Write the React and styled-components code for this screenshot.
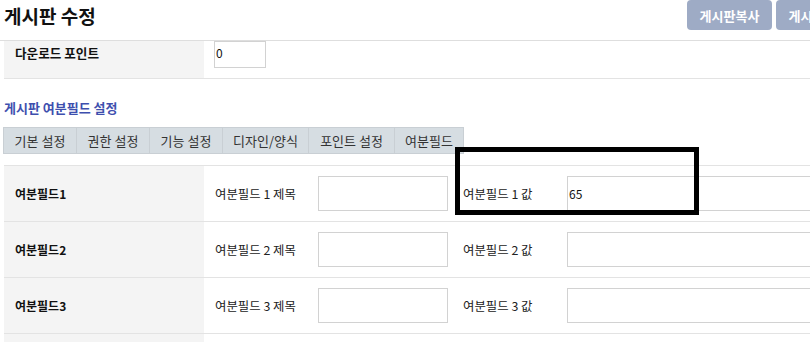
import styled, { createGlobalStyle } from "styled-components";

const GlobalStyle = createGlobalStyle`
  html, body {
    margin: 0;
    padding: 0;
    background: #fff;
    overflow: hidden;
  }
  body {
    font-family: "Noto Sans CJK KR", "Noto Sans", sans-serif;
    color: #222;
  }
  * {
    box-sizing: border-box;
  }
`;

const Page = styled.div`
  position: relative;
  width: 865px;
`;

const Header = styled.div`
  display: flex;
  justify-content: space-between;
  align-items: flex-start;
  height: 41px;
  padding: 0 4px;
  border-bottom: 1px solid #dedede;
`;

const Title = styled.h1`
  margin: 0;
  padding-top: 2px;
  font-size: 19px;
  font-weight: 700;
  line-height: 28px;
  color: #111;
`;

const ButtonGroup = styled.div`
  display: flex;
  gap: 4px;
`;

const Button = styled.button`
  width: 85px;
  height: 30px;
  border: none;
  border-radius: 4px;
  background: #9eabc5;
  color: #fff;
  font-family: inherit;
  font-size: 13px;
  font-weight: 700;
  padding: 0;
`;

const Row = styled.div`
  display: grid;
  grid-template-columns: 200px 1fr;
  margin-left: 4px;
  min-height: ${(p) => p.$height}px;
  border-bottom: 1px solid #e3e3e3;
`;

const Th = styled.div`
  background: #f4f4f4;
  padding: ${(p) => (p.$top ? "2px 11px 0" : "0 11px")};
  display: flex;
  align-items: ${(p) => (p.$top ? "flex-start" : "center")};
  font-size: ${(p) => p.$size || 12}px;
  font-weight: 700;
  color: #111;
`;

const Td = styled.div`
  display: flex;
  align-items: ${(p) => (p.$top ? "flex-start" : "center")};
  padding-left: ${(p) => p.$pad}px;
  font-size: 12px;
`;

const FieldLabel = styled.span`
  width: ${(p) => p.$width}px;
  margin-left: ${(p) => p.$gap || 0}px;
  flex-shrink: 0;
  font-size: 12.4px;
  color: #222;
`;

const Input = styled.div`
  width: ${(p) => p.$width}px;
  height: ${(p) => p.$height}px;
  flex-shrink: 0;
  border: 1px solid #d2d2d2;
  background: #fff;
  font-size: 12px;
  color: #111;
  padding: ${(p) => (p.$top ? "2px 1px" : "0 1px")};
  display: flex;
  align-items: ${(p) => (p.$top ? "flex-start" : "center")};
`;

const SectionTitle = styled.h2`
  margin: 0;
  padding: 20px 4px 0;
  height: 48px;
  font-size: 13px;
  font-weight: 700;
  color: #3e4fae;
  line-height: 18px;
`;

const Tabs = styled.ul`
  display: flex;
  margin: 0 0 0 3px;
  padding: 0;
  list-style: none;
  height: 27px;
`;

const Tab = styled.li`
  width: ${(p) => p.$width}px;
  height: 27px;
  border: 1px solid #c9cfd4;
  border-left-width: ${(p) => (p.$first ? 1 : 0)}px;
  background: #d6dde2;
  font-size: 13px;
  color: #333;
  display: flex;
  align-items: center;
  justify-content: center;
`;

const FieldTable = styled.div`
  margin-top: 11px;
  border-top: 1px solid #e3e3e3;
  margin-left: 4px;
`;

const FieldRow = styled(Row)`
  margin-left: 0;
`;

const Highlight = styled.div`
  position: absolute;
  left: 455px;
  top: 147px;
  width: 244px;
  height: 68px;
  border: 5px solid #000;
`;

const tabs = [
  { label: "기본 설정", width: 74 },
  { label: "권한 설정", width: 73 },
  { label: "기능 설정", width: 73 },
  { label: "디자인/양식", width: 86 },
  { label: "포인트 설정", width: 86 },
  { label: "여분필드", width: 69 },
];

const fields = [
  { n: 1, value: "65" },
  { n: 2, value: "" },
  { n: 3, value: "" },
];

export default function App() {
  return (
    <Page>
      <GlobalStyle />
      <Header>
        <Title>게시판 수정</Title>
        <ButtonGroup>
          <Button>게시판복사</Button>
          <Button>게시판삭제</Button>
        </ButtonGroup>
      </Header>

      <Row $height={38}>
        <Th $top $size={12.6}>
          다운로드 포인트
        </Th>
        <Td $top $pad={10}>
          <Input $width={52} $height={27} $top>
            0
          </Input>
        </Td>
      </Row>

      <SectionTitle>게시판 여분필드 설정</SectionTitle>

      <Tabs>
        {tabs.map((t, i) => (
          <Tab key={t.label} $width={t.width} $first={i === 0}>
            {t.label}
          </Tab>
        ))}
      </Tabs>

      <FieldTable>
        {fields.map((f) => (
          <FieldRow key={f.n} $height={56}>
            <Th>여분필드{f.n}</Th>
            <Td $pad={11}>
              <FieldLabel $width={103}>여분필드 {f.n} 제목</FieldLabel>
              <Input $width={130} $height={35} />
              <FieldLabel $width={104} $gap={15}>
                여분필드 {f.n} 값
              </FieldLabel>
              <Input $width={260} $height={35}>
                {f.value}
              </Input>
            </Td>
          </FieldRow>
        ))}
        <FieldRow $height={20}>
          <Th />
          <Td />
        </FieldRow>
      </FieldTable>

      <Highlight />
    </Page>
  );
}
